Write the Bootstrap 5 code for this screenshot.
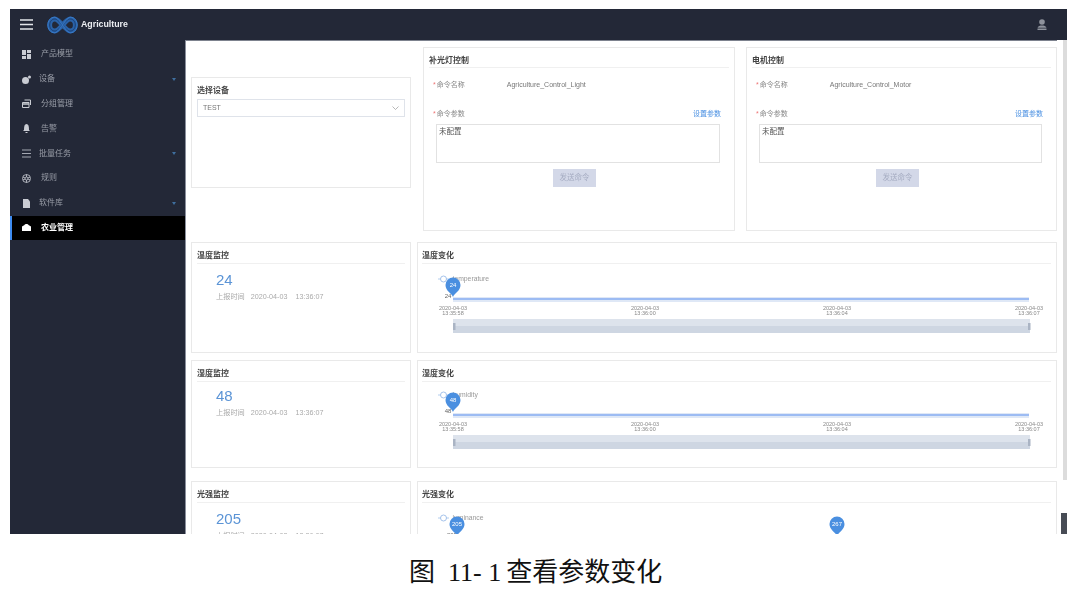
<!DOCTYPE html>
<html lang="zh">
  <head>
    <meta charset="UTF-8" />
    <title>农业管理</title>
    <link href="https://cdn.jsdelivr.net/npm/bootstrap@5.3.0/dist/css/bootstrap.min.css" rel="stylesheet" />
    <style>
      body {
        background: #fff;
        font-family: "Liberation Sans", "Noto Sans CJK SC", sans-serif;
        overflow: hidden;
      }
      .shot {
        width: 1057px;
        height: 525px;
        margin: 9px 0 0 10px;
        overflow: hidden;
        filter: blur(0.45px);
      }
      .top-bar {
        height: 31px;
        background: #232837;
        color: #fff;
        padding: 0 20px 0 10px;
      }
      .brand-name {
        font-size: 8.8px;
        font-weight: 700;
        margin-left: 3px;
        color: #eceef2;
      }
      .logo-mark {
        margin-left: 14px;
      }
      .body-wrap {
        height: 494px;
      }
      .side-menu {
        width: 175px;
        flex: none;
        background: #232837;
        padding-top: 2px;
      }
      .side-item {
        height: 24.8px;
        font-size: 8px;
        color: #9a9ea8;
        padding: 0 9px 0 10px;
        border-left: 2px solid transparent;
      }
      .side-item svg.ico {
        width: 9px;
        height: 9px;
        margin-right: 10px;
        flex: none;
      }
      .side-item svg.ico.tight {
        margin-right: 8px;
      }
      .side-item.on {
        background: #000;
        color: #fff;
        font-weight: 700;
        border-left-color: #3d8bf0;
      }
      .side-caret {
        width: 0;
        height: 0;
        border-left: 2.5px solid transparent;
        border-right: 2.5px solid transparent;
        border-top: 3px solid #3f6f9f;
      }
      .main-pane {
        width: 872px;
        flex: none;
        background: #fff;
        padding: 6px 0 0 5px;
        border-left: 1px solid #8a8f9c;
        border-top: 1px solid #7d828e;
      }
      .scroll-strip {
        flex: 1;
        background: #fff;
        position: relative;
      }
      .scroll-strip::after {
        content: "";
        position: absolute;
        left: 6px;
        right: 0;
        top: 0;
        height: 440px;
        background: #dcdcdc;
      }
      .scroll-strip::before {
        content: "";
        position: absolute;
        left: 4px;
        right: 0;
        top: 473px;
        bottom: 0;
        background: #474c55;
      }
      .pane-card {
        border: 1px solid #e9e9e9;
        border-radius: 0;
        background: #fff;
        flex: none;
      }
      .card-title-line {
        font-size: 8px;
        font-weight: 700;
        color: #444;
        margin: 0 5px;
        height: 21px;
        line-height: 26px;
        border-bottom: 1px solid #f0f0f0;
      }
      .cmd-card .card-title-line {
        height: 20px;
      }
      .chart-card .card-title-line {
        margin-left: 4px;
      }
      .pick-card {
        width: 220px;
        height: 111px;
        margin-top: 30px;
        padding: 8px 5px;
      }
      .pick-title {
        font-size: 8px;
        font-weight: 700;
        color: #444;
        line-height: 10px;
      }
      .pick-select {
        height: 18px;
        margin-top: 3px;
        border: 1px solid #dfe3ea;
        font-size: 7px;
        color: #777;
        padding: 0 5px;
      }
      .cmd-card {
        width: 312px;
        height: 184px;
        margin-left: 12px;
      }
      .cmd-card + .cmd-card {
        width: 311px;
        margin-left: 11px;
      }
      .cmd-row {
        font-size: 7px;
        color: #888;
        margin: 12px 13px 0 9px;
      }
      .cmd-row + .cmd-row {
        margin-top: 18px;
      }
      .cmd-row b {
        color: #e77;
        font-weight: 400;
        margin-right: 1px;
      }
      .cmd-value {
        margin-left: 42px;
        color: #777;
      }
      .cmd-link {
        color: #4a90e2;
      }
      .cmd-text {
        height: 39px;
        margin: 5px 14px 0 12px;
        border: 1px solid #e2e2e2;
        font-size: 7.5px;
        color: #555;
        padding: 1px 2px;
      }
      .cmd-btn {
        width: 43px;
        height: 18px;
        background: #d3d8e8;
        color: #a6acc2;
        font-size: 7.5px;
        border: 0;
        border-radius: 0;
        padding: 0;
        margin: 6px 0 0 129px;
        display: block;
      }
      .metric-card {
        width: 220px;
      }
      .chart-card {
        width: 640px;
        margin-left: 6px;
      }
      .metric-num {
        font-size: 15px;
        color: #5b94d6;
        margin: 7px 0 0 24px;
        line-height: 18px;
      }
      .metric-num.close-up {
        margin-top: 5px;
      }
      .metric-time {
        font-size: 7.2px;
        color: #aaa;
        margin: 3px 0 0 24px;
        white-space: pre;
      }
      .chart-svg {
        display: block;
      }
      .chart-svg text {
        font-family: "Liberation Sans", sans-serif;
      }
      .caption-line {
        font-family: "Noto Sans CJK SC", sans-serif;
        font-size: 26px;
        line-height: 36px;
        margin-top: 18px;
        padding-left: 409px;
        color: #111;
        white-space: pre;
      }
      .caption-num {
        font-family: "Liberation Serif", serif;
        margin: 0 5px 0 13px;
      }
    </style>
  </head>
  <body>
    <div class="shot">
      <div class="top-bar d-flex align-items-center">
        <svg width="13" height="11" viewBox="0 0 13 11"><path d="M0 1h13M0 5.500h13M0 10h13" stroke="#e4e6ea" stroke-width="1.500" /></svg>
        <svg class="logo-mark" width="31" height="18" viewBox="0 0 31 18" fill="none">
          <path d="M15.500 9C12 5 10 3 7.800 3 4.800 3 2.700 5.700 2.700 9s2.100 6 5.100 6c2.200 0 4.200-2 7.700-6s5.500-6 7.700-6c3 0 5.100 2.700 5.100 6s-2.100 6-5.100 6c-2.200 0-4.200-2-7.700-6z" stroke="#2a62a8" stroke-width="4.800" />
          <path d="M15.500 9C12 5 10 3 7.800 3 4.800 3 2.700 5.700 2.700 9s2.100 6 5.100 6c2.200 0 4.200-2 7.700-6s5.500-6 7.700-6c3 0 5.100 2.700 5.100 6s-2.100 6-5.100 6c-2.200 0-4.200-2-7.700-6z" stroke="#173c70" stroke-width=".9" />
          <path d="M15.500 9C12 4 9.500 1.200 7.600 1.200 3.400 1.200.8 5 .8 9s2.600 7.800 6.800 7.800c1.900 0 4.400-2.800 7.900-7.800s6-7.800 7.900-7.800c4.200 0 6.800 3.800 6.800 7.800s-2.600 7.800-6.800 7.800c-1.900 0-4.400-2.800-7.900-7.800z" stroke="#3f86d8" stroke-width=".7" />
        </svg>
        <span class="brand-name">Agriculture</span>
        <svg class="ms-auto" width="10" height="11" viewBox="0 0 10 11" fill="#8e929c"><circle cx="5" cy="3" r="2.800" /><path d="M.5 8.800C1 7 3 6.400 5 6.400s4 .6 4.500 2.400z" /><path d="M.5 9.500h9V11h-9z" /></svg>
      </div>
      <div class="body-wrap d-flex">
        <nav class="side-menu">
          <div class="side-item d-flex align-items-center">
            <svg class="ico" viewBox="0 0 9 9" fill="#c9ccd3"><path d="M0 0h4v5H0zM5 0h4v3H5zM0 6h4v3H0zM5 4h4v5H5z" /></svg><span>产品模型</span>
          </div>
          <div class="side-item d-flex align-items-center">
            <svg class="ico tight" viewBox="0 0 9 9" fill="#c9ccd3"><circle cx="3.500" cy="5.500" r="3.500" /><circle cx="7.500" cy="2" r="1.500" /></svg><span>设备</span><i class="side-caret ms-auto"></i>
          </div>
          <div class="side-item d-flex align-items-center">
            <svg class="ico" viewBox="0 0 9 9" fill="none" stroke="#c9ccd3"><path d="M.5 3.500h6.500v5H.500zM2.500 1h6v5" /><path d="M.5 5h6.500" stroke-width="1.500" /></svg><span>分组管理</span>
          </div>
          <div class="side-item d-flex align-items-center">
            <svg class="ico" viewBox="0 0 9 9" fill="#c9ccd3"><path d="M4.500 0C6.500 0 7 2 7 6l1 1H1l1-1C2 2 2.500 0 4.500 0zM3.500 8h2v1h-2z" /></svg><span>告警</span>
          </div>
          <div class="side-item d-flex align-items-center">
            <svg class="ico tight" viewBox="0 0 9 9" stroke="#a4a8b2"><path d="M0 1h9M0 4.500h9M0 8h9" /></svg><span>批量任务</span><i class="side-caret ms-auto"></i>
          </div>
          <div class="side-item d-flex align-items-center">
            <svg class="ico" viewBox="0 0 9 9" fill="none" stroke="#c9ccd3" stroke-width=".8"><circle cx="4.500" cy="4.500" r="4" /><circle cx="4.500" cy="4.500" r="1.500" /><path d="M4.500.5v2.500M4.500 6v2.500M.8 3l2.500 1M5.700 5l2.500 1M.8 6l2.500-1M5.700 4l2.500-1" /></svg><span>规则</span>
          </div>
          <div class="side-item d-flex align-items-center">
            <svg class="ico tight" viewBox="0 0 9 9" fill="#c9ccd3"><path d="M1 0h5l2 2.500V9H1z" /></svg><span>软件库</span><i class="side-caret ms-auto"></i>
          </div>
          <div class="side-item on d-flex align-items-center">
            <svg class="ico" viewBox="0 0 9 9" fill="#fff"><path d="M0 3.500 2.500 2C3 .8 6 .8 6.500 2L9 3.500V8H0z" /></svg><span>农业管理</span>
          </div>
        </nav>
        <main class="main-pane">
          <div class="d-flex">
            <div class="pane-card pick-card">
              <div class="pick-title">选择设备</div>
              <div class="pick-select d-flex align-items-center justify-content-between">
                <span>TEST</span>
                <svg width="7" height="4" viewBox="0 0 7 4" fill="none" stroke="#999" stroke-width=".7"><path d="M.5.500 3.500 3.500 6.500.5" /></svg>
              </div>
            </div>
            <div class="pane-card cmd-card">
              <div class="card-title-line">补光灯控制</div>
              <div class="cmd-row d-flex"><span><b>*</b>命令名称</span><span class="cmd-value">Agriculture_Control_Light</span></div>
              <div class="cmd-row d-flex justify-content-between"><span><b>*</b>命令参数</span><span class="cmd-link">设置参数</span></div>
              <div class="cmd-text">未配置</div>
              <button class="btn cmd-btn" type="button">发送命令</button>
            </div>
            <div class="pane-card cmd-card">
              <div class="card-title-line">电机控制</div>
              <div class="cmd-row d-flex"><span><b>*</b>命令名称</span><span class="cmd-value">Agriculture_Control_Motor</span></div>
              <div class="cmd-row d-flex justify-content-between"><span><b>*</b>命令参数</span><span class="cmd-link">设置参数</span></div>
              <div class="cmd-text">未配置</div>
              <button class="btn cmd-btn" type="button">发送命令</button>
            </div>
          </div>
          <div id="metric-rows"></div>
        </main>
        <div class="scroll-strip"></div>
      </div>
    </div>
    <div class="caption-line">图<span class="caption-num">11- 1</span>查看参数变化</div>

    <script>
      // 三行监控数据，chart 里的 y 都是相对卡片顶部
      const rows = [
        { gap: 11, h: 111, a: "温度监控", b: "温度变化", v: 24, legend: "temperature", legY: 37, pinY: 43, lineY: 57 },
        { gap: 7, h: 108, a: "湿度监控", b: "湿度变化", v: 48, legend: "humidity", legY: 35, pinY: 40, lineY: 55, numClass: "close-up" },
        { gap: 13, h: 108, a: "光强监控", b: "光强变化", v: 205, legend: "luminance", legY: 37, pinY: 43, lineY: 90, extra: 267 },
      ];
      const ticks = [
        [35, "13:35:58"],
        [227, "13:36:00"],
        [419, "13:36:04"],
        [611, "13:36:07"],
      ];

      function pin(x, y, label) {
        return `<path d="M${x} ${y + 12}c-1.500-4-7.500-6-7.500-12a7.500 7.500 0 0 1 15 0c0 6-6 8-7.500 12z" fill="#4a8fe0"/>
          <text x="${x}" y="${y + 2}" font-size="6" fill="#fff" text-anchor="middle">${label}</text>`;
      }

      function chartSvg(r) {
        const off = 22; // svg starts under the title line
        const py = r.pinY - off;
        const ly = r.lineY - off;
        let out = `<line x1="20" x2="31" y1="${r.legY - off}" y2="${r.legY - off}" stroke="#9fc0ea" stroke-width=".8"/>
          <circle cx="25.500" cy="${r.legY - off}" r="3" fill="#fff" stroke="#8fb4e6" stroke-width=".8"/>
          <text x="34.500" y="${r.legY - off + 2}" font-size="6.800" fill="#999">${r.legend}</text>`;
        out += `<rect x="35" y="${ly - 2}" width="576" height="5" fill="#dfe8f6"/>
          <line x1="35" x2="611" y1="${ly}" y2="${ly}" stroke="#5b8ff0" stroke-width="1"/>`;
        ticks.forEach(([x, t]) => {
          out += `<text x="${x}" y="${ly + 11}" font-size="5.500" fill="#888" text-anchor="middle">2020-04-03</text>
            <text x="${x}" y="${ly + 16}" font-size="5.500" fill="#888" text-anchor="middle">${t}</text>`;
        });
        out += `<rect x="35" y="${ly + 20}" width="577" height="7" fill="#dde3ec"/>
          <rect x="35" y="${ly + 27}" width="577" height="7" fill="#ced6e2"/>
          <rect x="35" y="${ly + 24}" width="2.500" height="7" fill="#aab4c4"/>
          <rect x="610" y="${ly + 24}" width="2.500" height="7" fill="#aab4c4"/>`;
        const gx = r.extra ? 39 : 35;
        out += `<text x="${gx - 5}" y="${py + 13}" font-size="6" fill="#666" text-anchor="middle">${r.v}</text>`;
        out += pin(gx, py, r.v);
        if (r.extra) out += pin(419, py, r.extra);
        return `<svg class="chart-svg" width="638" height="${r.h - 24}">${out}</svg>`;
      }

      document.getElementById("metric-rows").innerHTML = rows
        .map(
          (r) => `
          <div class="d-flex" style="margin-top:${r.gap}px">
            <div class="pane-card metric-card" style="height:${r.h}px">
              <div class="card-title-line">${r.a}</div>
              <div class="metric-num ${r.numClass || ""}">${r.v}</div>
              <div class="metric-time">上报时间   2020-04-03    13:36:07</div>
            </div>
            <div class="pane-card chart-card" style="height:${r.h}px">
              <div class="card-title-line">${r.b}</div>
              ${chartSvg(r)}
            </div>
          </div>`
        )
        .join("");
    </script>
    <script src="https://cdn.jsdelivr.net/npm/bootstrap@5.3.0/dist/js/bootstrap.bundle.min.js"></script>
  </body>
</html>
